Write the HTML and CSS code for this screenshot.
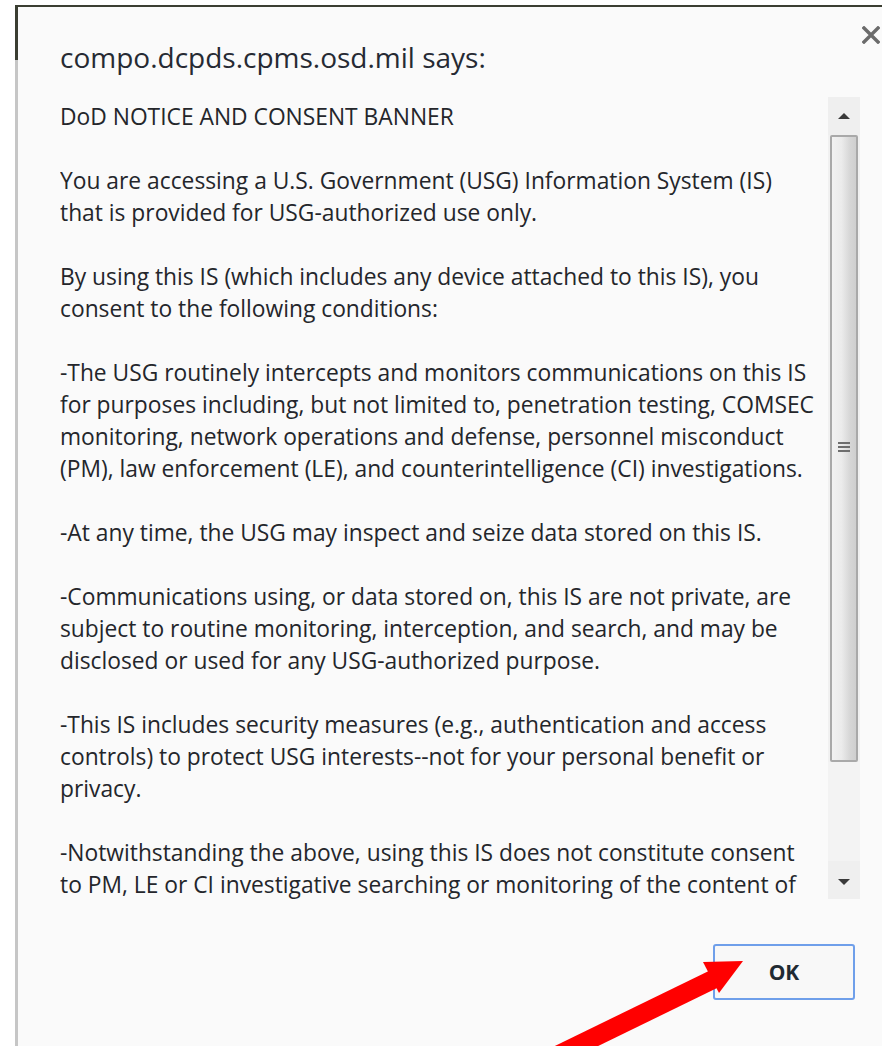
FILE: index.html
```html
<!DOCTYPE html>
<html lang="en">
<head>
<meta charset="utf-8">
<title>compo.dcpds.cpms.osd.mil says:</title>
<link rel="stylesheet" href="styles.css">
</head>
<body>
<div class="frame">
  <div class="dialog">
    <div class="header">
      <h1 class="title">compo.dcpds.cpms.osd.mil says:</h1>
      <svg class="close" width="18" height="18" viewBox="0 0 18 18" aria-label="Close">
        <path d="M2 2 L16 16 M16 2 L2 16" stroke="#6b6b6b" stroke-width="3.4" stroke-linecap="square"/>
      </svg>
    </div>
    <div class="scrollbox">
      <div class="message">DoD NOTICE AND CONSENT BANNER

You are accessing a U.S. Government (USG) Information System (IS)
that is provided for USG-authorized use only.

By using this IS (which includes any device attached to this IS), you
consent to the following conditions:

-The USG routinely intercepts and monitors communications on this IS
for purposes including, but not limited to, penetration testing, COMSEC
monitoring, network operations and defense, personnel misconduct
(PM), law enforcement (LE), and counterintelligence (CI) investigations.

-At any time, the USG may inspect and seize data stored on this IS.

-Communications using, or data stored on, this IS are not private, are
subject to routine monitoring, interception, and search, and may be
disclosed or used for any USG-authorized purpose.

-This IS includes security measures (e.g., authentication and access
controls) to protect USG interests--not for your personal benefit or
privacy.

-Notwithstanding the above, using this IS does not constitute consent
to PM, LE or CI investigative searching or monitoring of the content of</div>
      <div class="scrollbar">
        <div class="sb-btn"><span class="tri-up"></span></div>
        <div class="sb-thumb"><span class="grip"></span></div>
        <div class="sb-track"></div>
        <div class="sb-btn"><span class="tri-down"></span></div>
      </div>
    </div>
    <div class="actions">
      <button class="ok">OK</button>
    </div>
  </div>
</div>
<svg class="arrow" width="882" height="1046" viewBox="0 0 882 1046">
  <line x1="556" y1="1056" x2="716" y2="978" stroke="#ff0000" stroke-width="19"/>
  <polygon points="743,961 703,962 719,993" fill="#ff0000"/>
</svg>
</body>
</html>
```

FILE: styles.css
```css
html, body {
  margin: 0;
  padding: 0;
  background: #ffffff;
  overflow: hidden;
}

body {
  width: 882px;
  height: 1046px;
  position: relative;
  font-family: "Open Sans", "Noto Sans", sans-serif;
}

/* window edge: dark top line, dark then grey left edge */
.frame {
  margin: 5px 0 0 15px;
  padding: 2px 0 0 3px;
  background: linear-gradient(to bottom, #3b3e32 0, #3b3e32 55px, #c6c6c6 55px, #c6c6c6 100%);
}

.dialog {
  background: #fafafa;
  height: 1039px;
  display: flex;
  flex-direction: column;
  padding-left: 42px;
  box-sizing: border-box;
}

.header {
  display: flex;
  justify-content: space-between;
  align-items: flex-start;
  height: 90px;
}

.title {
  margin: 32px 0 0 0;
  font-weight: normal;
  font-size: 28px;
  line-height: 36px;
  color: #262a33;
}

.close {
  margin: 19px 2px 0 0;
  display: block;
}

.scrollbox {
  display: flex;
  height: 802px;
  width: 800px;
}

.message {
  flex: 1;
  white-space: pre;
  overflow: hidden;
  font-size: 22.8px;
  line-height: 32px;
  color: #24262b;
  padding-top: 4px;
}

/* classic scrollbar */
.scrollbar {
  width: 32px;
  display: flex;
  flex-direction: column;
  background: #f1f1f1;
}

.sb-btn {
  height: 38px;
  display: flex;
  align-items: center;
  justify-content: center;
  background: #efefef;
}

.tri-up {
  width: 0;
  height: 0;
  border-left: 6px solid transparent;
  border-right: 6px solid transparent;
  border-bottom: 6px solid #3a3a3a;
}

.tri-down {
  width: 0;
  height: 0;
  border-left: 6px solid transparent;
  border-right: 6px solid transparent;
  border-top: 6px solid #3a3a3a;
  margin-top: 4px;
}

.sb-thumb {
  height: 627px;
  margin: 0 2px;
  border: 2px solid #a9a9a9;
  border-radius: 2px;
  background: linear-gradient(to right, #f2f2f2 0%, #ebebeb 40%, #d6d6d6 75%, #cfcfcf 100%);
  display: flex;
  align-items: center;
  justify-content: center;
  box-sizing: border-box;
}

.grip {
  width: 12px;
  height: 10px;
  background: repeating-linear-gradient(to bottom, #6e6e6e 0, #6e6e6e 2px, transparent 2px, transparent 4px);
  margin-top: -4px;
}

.sb-track {
  flex: 1;
  background: #f3f3f3;
}

.actions {
  display: flex;
  justify-content: flex-end;
  padding: 45px 27px 0 0;
}

.ok {
  width: 142px;
  height: 56px;
  border: 2px solid #6f9fea;
  border-radius: 3px;
  background: #f8f8f8;
  font-family: "Open Sans", "Noto Sans", sans-serif;
  font-weight: bold;
  font-size: 21px;
  color: #1f2a33;
}

.arrow {
  position: absolute;
  left: 0;
  top: 0;
}
```
